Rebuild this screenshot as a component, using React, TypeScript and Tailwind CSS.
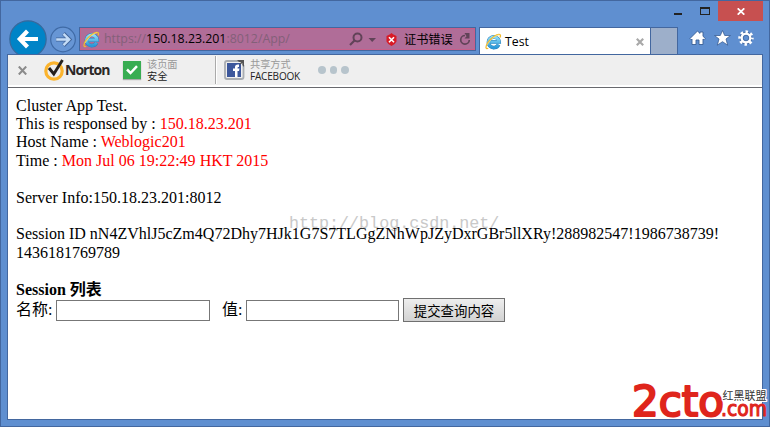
import type { ReactNode } from "react";

function IELogo() {
  return (
    <svg width="17" height="17" viewBox="0 0 17 17" className="shrink-0">
      <defs>
        <linearGradient id="ie" x1="0" y1="0" x2="0" y2="1">
          <stop offset="0" stopColor="#8edcf8" />
          <stop offset="1" stopColor="#2b98d8" />
        </linearGradient>
      </defs>
      <path d="M13.600 11.600A5.300 5.300 0 1 1 14.100 8.900H5.200" fill="none" stroke="#2b7fb8" strokeWidth="3.700" />
      <path d="M13.500 11.600A5.300 5.300 0 1 1 14 8.900H5.200" fill="none" stroke="url(#ie)" strokeWidth="3" />
      <path d="M3.200 15.200C1 16.500 0 14.500 2.400 10.200C5.500 5 12.500 .3 14.800 1.500C15.800 2.200 15.500 3.500 15 4.500" fill="none" stroke="#f2b92c" strokeWidth="1.300" />
      <path d="M2.400 12C4 8 10 2.300 14.300 1.700" fill="none" stroke="#ffe377" strokeWidth=".7" />
    </svg>
  );
}

function BackButton() {
  return (
    <svg width="38" height="38" viewBox="0 0 38 38" className="-mt-[7px] ml-[8px] shrink-0">
      <circle cx="19" cy="19" r="18.200" fill="#0084c7" stroke="#38699c" strokeWidth="1.200" />
      <path d="M29 19H12M18.500 11L10.800 19L18.500 27" fill="none" stroke="#fff" strokeWidth="4.200" />
    </svg>
  );
}

function ForwardButton() {
  return (
    <svg width="27" height="27" viewBox="0 0 27 27" className="-mt-[1px] ml-[3px] shrink-0">
      <circle cx="13" cy="13.500" r="12.300" fill="#6796d5" stroke="#3f6aa5" strokeWidth="1.200" />
      <path d="M6 13.500H18.500M13.500 7.500L19.500 13.500L13.500 19.500" fill="none" stroke="#41659a" strokeWidth="3.900" />
      <path d="M6.200 13.500H18.500M13.500 7.800L19.200 13.500L13.500 19.200" fill="none" stroke="#c3dcf7" strokeWidth="2.400" />
    </svg>
  );
}

function AddressBar() {
  return (
    <div className="ml-[2px] flex h-[24px] w-[397px] shrink-0 items-center border border-[#43679f] bg-[#b06d98] shadow-[inset_0_0_0_1px_#c85f8a]">
      <div className="ml-[3px] flex"><IELogo /></div>
      <div className="ml-[4px] w-[238px] whitespace-pre font-['Open_Sans','Noto_Sans',sans-serif] text-[12.350px] leading-[20px] text-[#836079]">
        https://<span className="text-black">150.18.23.201</span>:8012/App/
      </div>
      <svg width="30" height="16" viewBox="0 0 30 16" className="ml-[7px]">
        <circle cx="8.500" cy="6.500" r="4" fill="none" stroke="#614358" strokeWidth="2" />
        <path d="M5.500 9.500L1 14" stroke="#614358" strokeWidth="2.200" />
        <path d="M19.500 7H27L23.200 11Z" fill="#614358" />
      </svg>
      <svg width="11" height="13" viewBox="0 0 11 13" className="ml-[7px]">
        <path d="M5.500 0L7 1.300L10.500 3V8.500Q9.500 11 5.500 13Q1.500 11 .5 8.500V3L4 1.300Z" fill="#d81b27" />
        <path d="M3 4.200L8 9.200M8 4.200L3 9.200" stroke="#fff" strokeWidth="1.600" />
      </svg>
      <span className="ml-[7px] whitespace-nowrap font-['Noto_Sans_CJK_SC',sans-serif] text-[12.200px] leading-[20px] text-black">证书错误</span>
      <svg width="12" height="13" viewBox="0 0 12 13" className="ml-[6px] shrink-0">
        <path d="M6 2.500A4.300 4.300 0 1 0 10.300 7" fill="none" stroke="#614358" strokeWidth="1.700" />
        <path d="M5.500 0L10.500 0V5.500H5.500L7.500 3.300Z" fill="#614358" />
      </svg>
    </div>
  );
}

function Tabs() {
  return (
    <div className="ml-[3px] flex h-[28px] shrink-0 border-x border-t border-[#43679f]">
      <div className="flex w-[170px] items-center bg-white pl-[5px]">
        <IELogo />
        <span className="ml-[3px] font-['Open_Sans','Noto_Sans',sans-serif] text-[12.300px] leading-4 text-black">Test</span>
        <svg width="8" height="8" viewBox="0 0 8 8" className="mr-[6px] ml-auto">
          <path d="M.8.8L7.200 7.200M7.200.8L.8 7.200" stroke="#a9a9a9" strokeWidth="2.200" />
        </svg>
      </div>
      <div className="w-[27px] border-l border-[#43679f] bg-[#9dafca]" />
    </div>
  );
}

function WindowTools() {
  return (
    <div className="mt-[3px] ml-[11px] flex shrink-0 gap-[8px]">
      <svg width="17" height="16" viewBox="0 0 17 16">
        <path d="M1 8.500L8.500 1L11 3.400V2H14V6.300L16.300 8.500L15 9.800L14 9V14.500H10V10H7V14.500H3V9L2.200 9.800Z" fill="#fff" stroke="#385d94" strokeWidth=".9" />
      </svg>
      <svg width="17" height="16" viewBox="0 0 17 16">
        <path d="M8.500.5L10.700 5.500H16.500L12 9L13.700 15.200L8.500 11.700L3.300 15.200L5 9L.5 5.500H6.300Z" fill="#fff" stroke="#385d94" strokeWidth=".8" />
      </svg>
      <svg width="16" height="16" viewBox="0 0 16 16" className="-ml-px">
        <circle cx="8" cy="8" r="5.300" fill="none" stroke="#385d94" strokeWidth="2" />
        <circle cx="8" cy="8" r="6.400" fill="none" stroke="#fff" strokeWidth="2.600" strokeDasharray="2.500 2.526" strokeDashoffset="1.250" />
        <circle cx="8" cy="8" r="4.300" fill="none" stroke="#fff" strokeWidth="2.500" />
        <circle cx="8" cy="8" r="2.800" fill="none" stroke="#385d94" strokeWidth=".7" />
      </svg>
    </div>
  );
}

function TitleBar() {
  return (
    <div className="flex h-[26px] shrink-0 items-start justify-end pr-[6px]">
      <svg width="44" height="20" viewBox="0 0 44 20">
        <path d="M0 12H8V14H0Z" fill="#222" />
        <path d="M26 6H36V14H26ZM27 8V13H35V8Z" fill="#222" fillRule="evenodd" />
      </svg>
      <div className="flex h-[20px] w-[45px] items-center justify-center bg-[#c75050]">
        <svg width="8" height="7" viewBox="0 0 8 7">
          <path d="M.7.3L7.300 6.700M7.300.3L.7 6.700" stroke="#fff" strokeWidth="1.700" />
        </svg>
      </div>
    </div>
  );
}

function NortonBar() {
  return (
    <div className="flex h-[33px] shrink-0 items-start border-b border-[#68696e] bg-white">
      <div className="flex h-[30px] w-full items-center bg-[#efefef]">
        <svg width="9" height="9" viewBox="0 0 9 9" className="ml-[10px]">
          <path d="M.8.5L8.200 8.500M8.200.5L.8 8.500" stroke="#8b8b8b" strokeWidth="2" />
        </svg>
        <svg width="21" height="22" viewBox="0 0 21 22" className="ml-[17px]">
          <circle cx="10" cy="12" r="8.200" fill="none" stroke="#fbb42e" strokeWidth="3.200" />
          <path d="M5 9L9.800 15L18.500 1" fill="none" stroke="#25211e" strokeWidth="2.900" />
        </svg>
        <span className="w-[44px] font-['Open_Sans',sans-serif] text-[14px] leading-5 font-bold tracking-[-1px] text-[#2b2827]">Norton</span>
        <div className="ml-[14px] flex size-[18px] items-center justify-center bg-[#38ad52] shadow-[0_1px_1px_#aaa]">
          <svg width="12" height="10" viewBox="0 0 12 10"><path d="M1 4.500L4.500 8L11 1.200" fill="none" stroke="#fff" strokeWidth="2.500" /></svg>
        </div>
        <div className="ml-[6px] w-[60px] font-['Noto_Sans_CJK_SC',sans-serif] text-[10.200px] leading-[12px]">
          <div className="text-[#999]">该页面</div>
          <div className="text-[#222]">安全</div>
        </div>
        <div className="ml-[8px] h-[28px] w-[2px] border-l border-[#aaa] bg-white" />
        <svg width="22" height="22" viewBox="0 0 22 22" className="ml-[7px]">
          <path d="M15 2H3Q1 2 1 4V18Q1 20 3 20H17.500Q19.500 20 19.500 18V6" fill="none" stroke="#a9adb2" strokeWidth="1.800" />
          <rect x="3" y="4" width="14" height="14" fill="#3c579c" />
          <path d="M11 18V12H9V9.500H11V8Q11 5 15 5.500V8H14Q13.500 8 13.500 9.500H15.500L15 12H13.500V18Z" fill="#fff" />
          <path d="M13 1H20V8L18.300 6V4L16.500 5.500L15.500 4.500L17.200 3H15Z" fill="#555" />
        </svg>
        <div className="ml-[4px] w-[52px] font-['Noto_Sans_CJK_SC',sans-serif] text-[10.200px] leading-[12px]">
          <div className="text-[#999]">共享方式</div>
          <div className="font-['Open_Sans','Noto_Sans',sans-serif] text-[10px] tracking-[-.18px] text-[#222]">FACEBOOK</div>
        </div>
        <div className="ml-[16px] flex gap-[4px]">
          <i className="size-[7.500px] rounded-full bg-[#b7c4cc]" />
          <i className="size-[7.500px] rounded-full bg-[#b7c4cc]" />
          <i className="size-[7.500px] rounded-full bg-[#b7c4cc]" />
        </div>
      </div>
    </div>
  );
}

function Line({ children }: { children?: ReactNode }) {
  return <div className="h-[18.400px] whitespace-pre">{children}</div>;
}

function Page() {
  return (
    <div className="relative grow bg-white px-[8px] pt-[8.600px] font-['Liberation_Serif','Noto_Sans_CJK_SC',serif] text-[16.020px] leading-[18.400px] text-black">
      <div className="absolute top-[125px] left-[281px] font-['Liberation_Mono',monospace] text-[16.700px] leading-[22px] whitespace-nowrap text-[#c9c9c9]">http://blog.csdn.net/</div>
      <div className="relative">
        <Line>Cluster App Test.</Line>
        <Line>This is responsed by : <span className="text-[#f00]">150.18.23.201</span></Line>
        <Line>Host Name : <span className="text-[#f00]">Weblogic201</span></Line>
        <Line>Time : <span className="text-[#f00]">Mon Jul 06 19:22:49 HKT 2015</span></Line>
        <Line />
        <Line>Server Info:150.18.23.201:8012</Line>
        <Line />
        <Line>Session ID nN4ZVhlJ5cZm4Q72Dhy7HJk1G7S7TLGgZNhWpJZyDxrGBr5llXRy!288982547!1986738739!</Line>
        <Line>1436181769789</Line>
        <Line />
        <Line><b>Session 列表</b></Line>
        <div className="-mt-[.6px] flex h-[24px] items-center">
          <span className="w-[40px] whitespace-nowrap">名称:</span>
          <input aria-label="名称" className="h-[21px] w-[154px] border border-[#777] bg-white px-1 outline-none" />
          <span className="ml-[12px] w-[24px] whitespace-nowrap">值:</span>
          <input aria-label="值" className="h-[21px] w-[153px] border border-[#777] bg-white px-1 outline-none" />
          <button className="ml-[4px] h-[24px] w-[102px] border border-[#707070] bg-linear-to-b from-[#eee] to-[#d2d2d2] font-['Noto_Sans_CJK_SC',sans-serif] text-[13.400px] leading-[20px] whitespace-nowrap text-black">提交查询内容</button>
        </div>
      </div>
    </div>
  );
}

function SiteMark() {
  return (
    <svg width="139" height="56" viewBox="0 -12 139 56" className="absolute top-[370px] left-[630px]">
      <g fill="#df251c" stroke="#df251c" strokeLinejoin="round" fontFamily="DejaVu Sans, sans-serif">
        <text x="1" y="33" textLength="92" lengthAdjust="spacingAndGlyphs" strokeWidth="2.200" fontSize="42">2cto</text>
        <text x="90" y="33" textLength="46" lengthAdjust="spacingAndGlyphs" strokeWidth="1.100" fontSize="21">.com</text>
      </g>
      <text x="91.500" y="17" textLength="44" lengthAdjust="spacingAndGlyphs" fill="#333" stroke="#fff" strokeWidth="2.500" strokeLinejoin="round" paintOrder="stroke" fontFamily="Noto Sans CJK SC, sans-serif" fontSize="11.500">红黑联盟</text>
    </svg>
  );
}

export default function App() {
  return (
    <div className="relative flex h-[427px] w-[770px] flex-col overflow-hidden border border-[#43679f] bg-[#5f8fd0]">
      <TitleBar />
      <div className="flex h-[27px] shrink-0 items-start">
        <BackButton />
        <ForwardButton />
        <AddressBar />
        <Tabs />
        <WindowTools />
      </div>
      <div className="relative mx-[6px] mb-[6px] flex grow flex-col border border-[#43679f]">
        <NortonBar />
        <Page />
      </div>
      <SiteMark />
    </div>
  );
}
